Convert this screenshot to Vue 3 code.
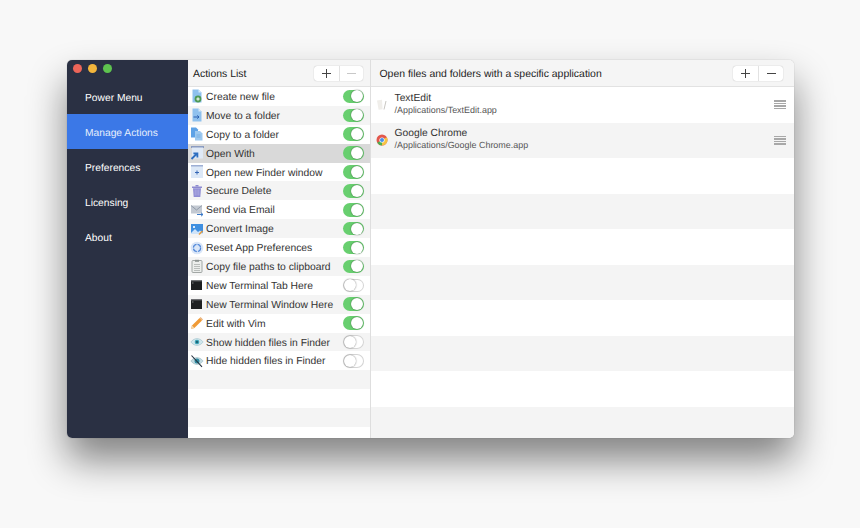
<script setup>
const nav = ['Power Menu', 'Manage Actions', 'Preferences', 'Licensing', 'About']
const actions = [
  { name: 'Create new file', icon: 'new', on: true },
  { name: 'Move to a folder', icon: 'move', on: true },
  { name: 'Copy to a folder', icon: 'copy', on: true },
  { name: 'Open With', icon: 'open', on: true, selected: true },
  { name: 'Open new Finder window', icon: 'window', on: true },
  { name: 'Secure Delete', icon: 'trash', on: true },
  { name: 'Send via Email', icon: 'mail', on: true },
  { name: 'Convert Image', icon: 'image', on: true },
  { name: 'Reset App Preferences', icon: 'reset', on: true },
  { name: 'Copy file paths to clipboard', icon: 'clip', on: true },
  { name: 'New Terminal Tab Here', icon: 'term', on: false },
  { name: 'New Terminal Window Here', icon: 'term', on: true },
  { name: 'Edit with Vim', icon: 'pencil', on: true },
  { name: 'Show hidden files in Finder', icon: 'eye', on: false },
  { name: 'Hide hidden files in Finder', icon: 'eyeoff', on: false },
  { name: '', icon: '', empty: true },
  { name: '', icon: '', empty: true },
  { name: '', icon: '', empty: true },
  { name: '', icon: '', empty: true },
]
const apps = [
  { name: 'TextEdit', path: '/Applications/TextEdit.app', icon: 'text' },
  { name: 'Google Chrome', path: '/Applications/Google Chrome.app', icon: 'chrome' },
  {}, {}, {}, {}, {}, {}, {}, {},
]
</script>

<template>
  <div class="page">
    <div class="window">
      <aside class="sidebar">
        <div class="lights">
          <span class="light red"></span>
          <span class="light yellow"></span>
          <span class="light green"></span>
        </div>
        <div v-for="n in nav" :key="n" class="nav" :class="{ active: n === 'Manage Actions' }">{{ n }}</div>
      </aside>

      <section class="list">
        <header class="head">
          <span class="title">Actions List</span>
          <div class="seg">
            <span class="seg-btn"><i class="plus"></i></span>
            <span class="seg-btn dim"><i class="minus"></i></span>
          </div>
        </header>
        <div class="rows">
          <div v-for="(a, i) in actions" :key="i" class="row" :class="{ selected: a.selected }">
            <template v-if="!a.empty">
              <svg class="ico" viewBox="0 0 14 14">
                <g v-if="a.icon === 'new'">
                  <path d="M2.5 0.5h6l3 3v10h-9z" fill="#8fc1ee" />
                  <path d="M8.5 .5l3 3h-3z" fill="#d6e9f9" />
                  <circle cx="8" cy="10" r="3.4" fill="#4f9a55" />
                  <path d="M6.3 10h3.4M8 8.3v3.4" stroke="#fff" stroke-width="1" />
                </g>
                <g v-else-if="a.icon === 'move'">
                  <path d="M2.5 0.5h6l3 3v10h-9z" fill="#8fc1ee" />
                  <path d="M8.5 .5l3 3h-3z" fill="#d6e9f9" />
                  <path d="M3.5 9h5.5M7.3 7.4L9 9l-1.7 1.6" stroke="#2a5fb0" stroke-width="1" fill="none" />
                </g>
                <g v-else-if="a.icon === 'copy'">
                  <path d="M1 0.5h5l2 2v8H1z" fill="#5ea2e6" />
                  <path d="M5 4h5l2.5 2.5v7H5z" fill="#9cc8ef" />
                  <path d="M6.5 8h4M6.5 10h4" stroke="#6fa7de" stroke-width=".8" />
                </g>
                <g v-else-if="a.icon === 'open'">
                  <path d="M1 1h13" stroke="#3c5ea8" stroke-width="1" />
                  <path d="M2 1.5h11v11H2z" fill="#dfe9f6" />
                  <path d="M1.5 13l5-5M3.4 7.4h4v4" stroke="#2f6fc0" stroke-width="1.8" fill="none" />
                </g>
                <g v-else-if="a.icon === 'window'">
                  <path d="M1 1h12" stroke="#3c5ea8" stroke-width="1" />
                  <path d="M1 1.5h12v11.5H1z" fill="#dce8f7" />
                  <path d="M5 7.5h4M7 5.5v4" stroke="#3566b5" stroke-width="1" />
                </g>
                <g v-else-if="a.icon === 'trash'">
                  <path d="M2 2.5h10v1.4H2z" fill="#8d8ad0" />
                  <path d="M5.5 1h3v1.5h-3z" fill="#8d8ad0" />
                  <path d="M3 4.2h8L10.3 13H3.7z" fill="#8f8cd4" />
                  <path d="M5.2 5.5v6M7 5.5v6M8.8 5.5v6" stroke="#b9b7e6" stroke-width=".7" />
                </g>
                <g v-else-if="a.icon === 'mail'">
                  <path d="M1 2.5h11v8H1z" fill="#c3c9d2" />
                  <path d="M1 2.5l5.5 4.5L12 2.5" fill="none" stroke="#8c96a4" stroke-width=".9" />
                  <path d="M7 11.5h6M11 9.8l2 1.7-2 1.7" stroke="#3a78c8" stroke-width="1" fill="none" />
                </g>
                <g v-else-if="a.icon === 'image'">
                  <path d="M1 2h12v10H1z" fill="#3f8fe0" />
                  <path d="M1 11l4-4 3 3 2-1.5 3 2.5v1H1z" fill="#cfe4fa" />
                  <circle cx="4" cy="5" r="1.1" fill="#fff" />
                  <path d="M9 12.5l3.5-3.5" stroke="#e59a3c" stroke-width="1.4" />
                </g>
                <g v-else-if="a.icon === 'reset'">
                  <circle cx="7" cy="7" r="6.3" fill="#d9e6f8" />
                  <circle cx="7" cy="7" r="3.6" fill="none" stroke="#4f86d8" stroke-width="1.2" stroke-dasharray="4.6 1.1" />
                </g>
                <g v-else-if="a.icon === 'clip'">
                  <rect x="2" y="1.5" width="10" height="12" rx="1" fill="#eceeec" stroke="#8e9492" stroke-width=".8" />
                  <path d="M5 .8h4v2H5z" fill="#8e9492" />
                  <path d="M4 5.5h6M4 7.5h6M4 9.5h6M4 11.5h6" stroke="#a3a8a6" stroke-width=".7" />
                </g>
                <g v-else-if="a.icon === 'term'">
                  <rect x="1" y="2.5" width="11" height="9.5" fill="#1e2022" />
                  <path d="M1 2.5h11v1H1z" fill="#56595c" />
                  <path d="M2.2 5h1.2" stroke="#cfd2d4" stroke-width=".7" />
                </g>
                <g v-else-if="a.icon === 'pencil'">
                  <path d="M1 13l1-3.4 7.6-7.6 2.4 2.4-7.6 7.6z" fill="#f09a35" />
                  <path d="M9.6 2l1-1 2.4 2.4-1 1z" fill="#e9b27a" />
                  <path d="M1 13l1-3.4 2.4 2.4z" fill="#f4d9b0" />
                </g>
                <g v-else-if="a.icon === 'eye'">
                  <path d="M.8 7C3 4.4 5 3.6 7 3.6S11 4.4 13.2 7C11 9.6 9 10.4 7 10.4S3 9.6.8 7z" fill="#cfe6ec" stroke="#8fb6c2" stroke-width=".5" />
                  <circle cx="7" cy="7" r="2.3" fill="#3aa1b5" />
                  <circle cx="7" cy="7" r=".9" fill="#10495a" />
                </g>
                <g v-else-if="a.icon === 'eyeoff'">
                  <path d="M.8 7C3 4.4 5 3.6 7 3.6S11 4.4 13.2 7C11 9.6 9 10.4 7 10.4S3 9.6.8 7z" fill="#c3dae1" stroke="#8fb0bb" stroke-width=".5" />
                  <circle cx="7" cy="7" r="2.5" fill="#2f8ba0" />
                  <path d="M1.5 1.5L12 12.8" stroke="#23313f" stroke-width="1.1" />
                </g>
              </svg>
              <span class="name">{{ a.name }}</span>
              <span class="toggle" :class="{ on: a.on }"><span class="knob"></span></span>
            </template>
          </div>
        </div>
      </section>

      <section class="detail">
        <header class="head">
          <span class="title">Open files and folders with a specific application</span>
          <div class="seg">
            <span class="seg-btn"><i class="plus"></i></span>
            <span class="seg-btn"><i class="minus"></i></span>
          </div>
        </header>
        <div class="app-rows">
          <div v-for="(a, i) in apps" :key="i" class="app-row">
            <template v-if="a.name">
              <svg class="app-ico" viewBox="0 0 12 12">
                <g v-if="a.icon === 'text'">
                  <path d="M1 1.5l5-.8 .6 9.6-4 .5z" fill="#f0eeea" />
                  <path d="M8 10.5L10 2" stroke="#c9c7c2" stroke-width="1" />
                </g>
                <g v-else>
                  <circle cx="6" cy="6" r="5.5" fill="#e2574c" />
                  <path d="M6 6L1.2 8.8A5.5 5.5 0 0 0 6 11.5z" fill="#4caf50" />
                  <path d="M6 6l4.8-2.7A5.5 5.5 0 0 1 6 11.5z" fill="#f6c344" />
                  <circle cx="6" cy="6" r="2.6" fill="#fff" />
                  <circle cx="6" cy="6" r="2" fill="#4a8fe7" />
                </g>
              </svg>
              <div class="app-text">
                <div class="app-name">{{ a.name }}</div>
                <div class="app-path">{{ a.path }}</div>
              </div>
              <span class="grip"><i></i><i></i><i></i><i></i></span>
            </template>
          </div>
        </div>
      </section>
    </div>
  </div>
</template>

<style>
body { background: #f8f8f8; }
</style>

<style scoped>
.page {
  width: 860px;
  height: 528px;
  box-sizing: border-box;
  padding: 60px 66px 90px 67px;
  background: #f8f8f8;
  overflow: hidden;
  font-family: "Liberation Sans", Arial, sans-serif;
  text-rendering: geometricPrecision;
  color: #333;
}
.window {
  display: flex;
  height: 378px;
  border-radius: 5px;
  overflow: hidden;
  background: #fff;
  box-shadow: 0 0 1px rgba(0, 0, 0, .35), 0 22px 38px rgba(0, 0, 0, .48);
}
.sidebar {
  width: 121px;
  flex: none;
  background: #2a3043;
  color: #fff;
  font-size: 10.25px;
}
.lights { display: flex; gap: 6px; height: 19px; padding: 4px 0 0 6px; box-sizing: border-box; }
.light { width: 9px; height: 9px; border-radius: 50%; }
.red { background: #ec6559; }
.yellow { background: #f2b53c; }
.green { background: #5ec34f; }
.nav {
  height: 35px;
  line-height: 35px;
  padding: 2px 0 0 18px;
  box-sizing: border-box;
}
.nav.active { background: #3b78e7; color: #e6eefc; }
.list {
  width: 181.5px;
  flex: none;
  border-right: 1px solid #dedede;
}
.detail { flex: 1; min-width: 0; }
.head {
  height: 27px;
  box-sizing: border-box;
  display: flex;
  align-items: center;
  justify-content: space-between;
  background: #f5f5f5;
  border-bottom: 1px solid #e2e2e2;
  padding: 0 6.5px 0 5px;
}
.detail .head { padding: 0 11px 0 9px; }
.title { font-size: 10.45px; color: #222; padding-top: 2px; }
.seg {
  display: flex;
  height: 15px;
  background: #fff;
  border-radius: 3px;
  box-shadow: 0 0 1px rgba(0, 0, 0, .35);
}
.seg-btn {
  width: 25px;
  box-sizing: border-box;
  display: flex;
  align-items: center;
  justify-content: center;
  border-left: 1px solid #e2e2e2;
}
.seg-btn:first-child { border-left: 0; }
.dim { width: 24px; }
.dim .minus { background: #c8c8c8; }
.plus, .minus { display: block; width: 9px; height: 1px; background: #444; }
.plus { position: relative; }
.plus::after {
  content: "";
  position: absolute;
  left: 4px;
  top: -4px;
  width: 1px;
  height: 9px;
  background: #444;
}
.rows { height: 351px; overflow: hidden; }
.row {
  height: 18.9px;
  display: flex;
  align-items: center;
  padding: 0 5.5px 0 2px;
  box-sizing: border-box;
  background: #fff;
}
.row:nth-child(even) { background: #f4f4f4; }
.row.selected { background: #d9d9d9; }
.ico { width: 14px; height: 14px; flex: none; }
.name { flex: 1; margin-left: 2px; padding-top: 2px; font-size: 10.33px; white-space: nowrap; }
.toggle {
  width: 21.5px;
  height: 13.5px;
  border-radius: 7px;
  flex: none;
  box-sizing: border-box;
  background: #fff;
  box-shadow: inset 0 0 0 1px #d4d4d4;
  position: relative;
}
.toggle.on { background: #68cf6f; box-shadow: none; }
.knob {
  position: absolute;
  top: .75px;
  left: 1px;
  width: 12px;
  height: 12px;
  border-radius: 50%;
  background: #fff;
  box-shadow: 0 0 1.5px rgba(0, 0, 0, .6);
}
.toggle.on .knob { left: 8.5px; }
.app-rows { height: 351px; overflow: hidden; }
.app-row {
  height: 35.5px;
  display: flex;
  align-items: center;
  padding: 0 8px 0 5px;
  box-sizing: border-box;
  background: #fff;
}
.app-row:nth-child(even) { background: #f4f4f4; }
.app-ico { width: 12px; height: 12px; flex: none; }
.app-text { flex: 1; margin-left: 7px; margin-top: -2px; }
.app-name { font-size: 10.3px; line-height: 13px; color: #333; }
.app-path { font-size: 8.95px; line-height: 11px; color: #555; }
.grip { display: flex; flex-direction: column; gap: 1px; width: 12px; }
.grip i { display: block; height: 1.5px; background: #a8a8a8; }
</style>
